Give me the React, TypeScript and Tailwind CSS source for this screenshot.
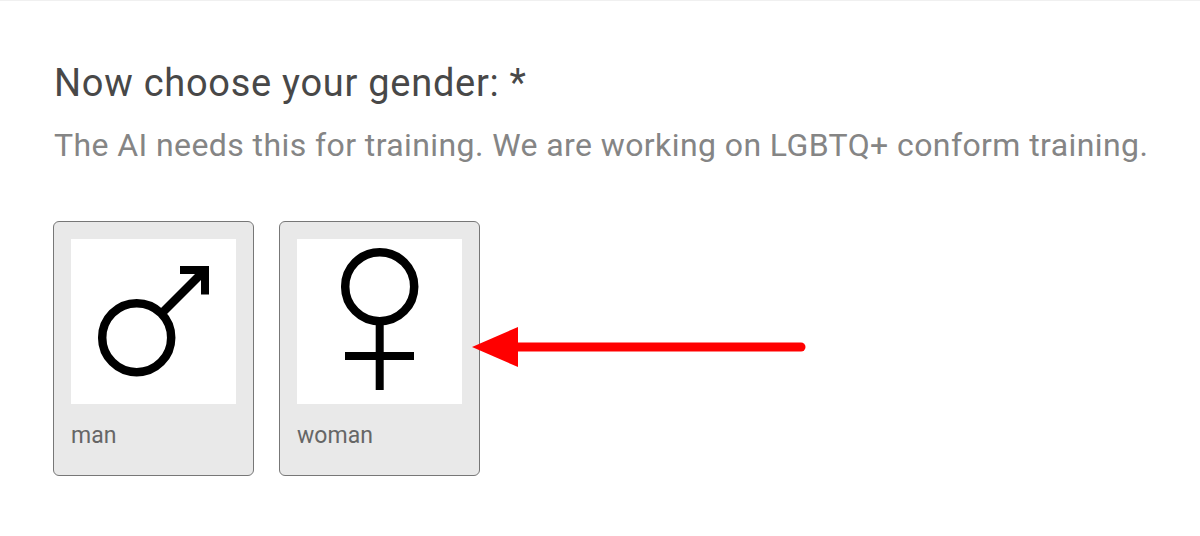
const OPTIONS = [
  {
    label: 'man',
    icon: (
      <svg viewBox="0 0 165 165" className="w-full h-full">
        <circle cx="65.7" cy="98.7" r="34.5" fill="none" stroke="#000" strokeWidth="8.5" />
        <path d="M91 74 L131 34" fill="none" stroke="#000" strokeWidth="8.5" />
        <path d="M109 27 H138 V55.5 H130 V35 H109 Z" fill="#000" />
      </svg>
    )
  },
  {
    label: 'woman',
    icon: (
      <svg viewBox="0 0 165 165" className="w-full h-full">
        <circle cx="82.7" cy="47.7" r="34.5" fill="none" stroke="#000" strokeWidth="8.5" />
        <path d="M82.7 84 V151 M48 117 H117" fill="none" stroke="#000" strokeWidth="8" />
      </svg>
    )
  }
]

export default function App() {
  return (
    <div className="relative w-[1200px] h-[536px] bg-white border-t border-[#f0f0f0] overflow-hidden font-['Roboto',sans-serif]">
      <div className="pl-[54px] pt-[58px]">
        <h2 className="text-[38px] leading-[48px] font-normal tracking-[0.72px] text-[#484848]">Now choose your gender: *</h2>
        <p className="mt-[18px] text-[32px] leading-[40px] font-normal tracking-[0.41px] text-[#858585]">
          The AI needs this for training. We are working on LGBTQ+ conform training.
        </p>

        <div className="flex gap-[25px] mt-[56px] -ml-px">
          {OPTIONS.map((option) => (
            <div key={option.label} className="w-[201px] h-[255px] bg-[#e9e9e9] border border-[#777] rounded-[6px] px-[17px] pt-[17px]">
              <div className="w-[165px] h-[165px] bg-white">{option.icon}</div>
              <div className="mt-[19px] text-[23px] leading-[26px] tracking-[0.05px] text-[#666]">{option.label}</div>
            </div>
          ))}
        </div>
      </div>

      <svg viewBox="0 0 340 50" className="absolute left-[470px] top-[321px] w-[340px] h-[50px]">
        <path d="M48 25 H331" fill="none" stroke="#ff0000" strokeWidth="9" strokeLinecap="round" />
        <path d="M2 25 L48 5 V45 Z" fill="#ff0000" />
      </svg>
    </div>
  )
}
